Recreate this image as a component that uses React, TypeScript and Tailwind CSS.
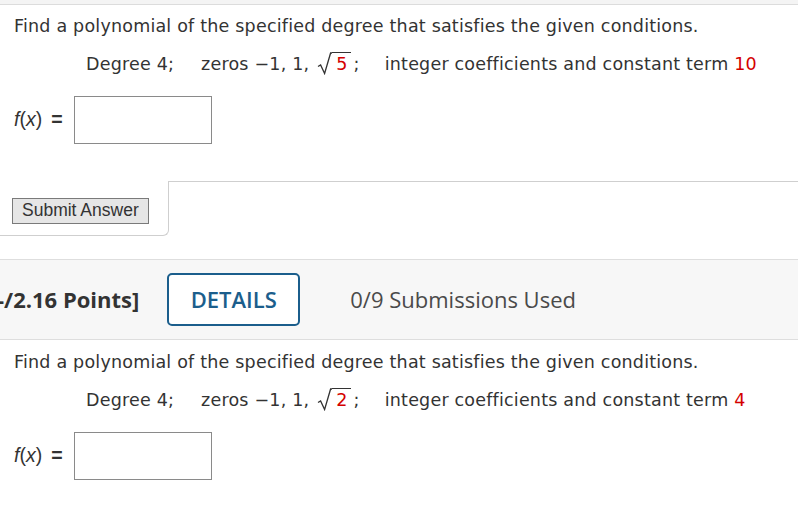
import * as React from "react"

function Sqrt({ n }: { n: string }) {
  return (
    <span className="ml-[8px] inline-flex items-stretch">
      <svg width="15" height="23" viewBox="0 0 15 23" className="block">
        <path d="M1 14.5 L3.6 13 L7.6 21.5 L13.6 1 L15 1" fill="none" stroke="#333" strokeWidth="1.3" />
      </svg>
      <span className="border-t-[1.3px] border-[#333] pl-[4px] pr-[3px] pt-[1px] leading-[21px] text-[#d40000]">{n}</span>
      <span className="ml-[3px] self-end leading-[24px]">;</span>
    </span>
  )
}

function Question({ root, term }: { root: string; term: string }) {
  return (
    <div
      className="pl-[14px] text-[17.5px] tracking-[0.2px] text-[#333]"
      style={{ fontFamily: '"DejaVu Sans", Verdana, sans-serif' }}
    >
      <p className="leading-[24px]">Find a polynomial of the specified degree that satisfies the given conditions.</p>
      <div className="mt-[14px] flex items-end pl-[72px] leading-[24px]">
        <span>Degree 4;</span>
        <span className="ml-[27px] inline-flex items-end">
          <span>zeros −1, 1,</span>
          <Sqrt n={root} />
        </span>
        <span className="ml-[25px]">
          integer coefficients and constant term <span className="text-[#d40000]">{term}</span>
        </span>
      </div>
      <div className="mt-[20px] flex items-center">
        <span
          className="flex w-[60px] items-center text-[19.5px] tracking-normal"
          style={{ fontFamily: '"Liberation Sans", Arial, sans-serif' }}
        >
          <span>
            <i>f</i>(<i>x</i>)
          </span>
          <span className="ml-[9px] font-bold">=</span>
        </span>
        <div className="h-[48px] w-[138px] border border-[#8a8a8a] bg-white" />
      </div>
    </div>
  )
}

export default function App() {
  return (
    <div className="min-h-screen bg-white">
      <div className="h-[5px] border-b border-[#dcdcdc] bg-[#f4f4f4]" />
      <div className="pt-[9px]">
        <Question root="5" term="10" />
      </div>

      {/* submit area */}
      <div className="mt-[37px] flex">
        <div className="flex h-[55px] w-[169px] items-start rounded-br-[6px] border-r border-b border-[#cfcfcf] pl-[12px] pt-[17px]">
          <button
            className="h-[26px] border border-[#7a7a7a] bg-[#e6e6e6] px-[9px] text-[17.5px] leading-none text-[#333]"
            style={{ fontFamily: '"Liberation Sans", Arial, sans-serif' }}
          >
            Submit Answer
          </button>
        </div>
        <div className="flex-1 border-t border-[#cfcfcf]" />
      </div>

      {/* points band */}
      <div
        className="mt-[23px] flex h-[81px] items-center border-y border-[#dedede] bg-[#f7f7f7]"
        style={{ fontFamily: '"Open Sans", sans-serif' }}
      >
        <span className="-ml-[3px] text-[22px] font-bold text-[#333]">-/2.16 Points]</span>
        <button className="ml-[28px] flex h-[53px] w-[133px] items-center justify-center rounded-[5px] border-2 border-[#1b5e8c] bg-white text-[22px] font-semibold text-[#1b5e8c]">
          DETAILS
        </button>
        <span className="ml-[50px] text-[22px] text-[#4a4a4a]">0/9 Submissions Used</span>
      </div>

      <div className="pt-[10px]">
        <Question root="2" term="4" />
      </div>
    </div>
  )
}
